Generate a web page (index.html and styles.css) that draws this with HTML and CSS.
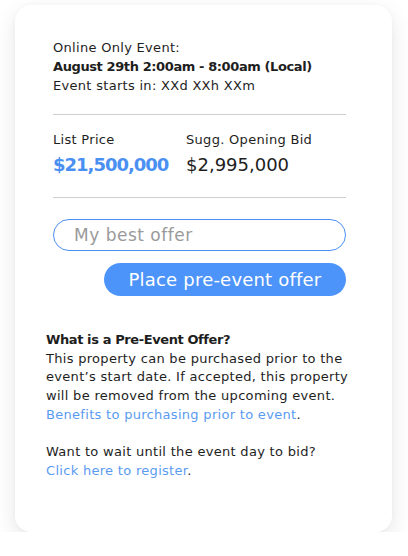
FILE: index.html
```html
<!DOCTYPE html>
<html>
<head>
<meta charset="utf-8">
<link rel="stylesheet" href="styles.css">
</head>
<body>
<div class="card">
  <div class="top">
    <div class="event">
      <div>Online Only Event:</div>
      <div class="bold">August 29th 2:00am - 8:00am (Local)</div>
      <div>Event starts in: XXd XXh XXm</div>
    </div>
    <div class="divider divider-first"></div>
    <div class="prices">
      <div class="col col-list">
        <div class="label">List Price</div>
        <div class="price blue">$21,500,000</div>
      </div>
      <div class="col">
        <div class="label">Sugg. Opening Bid</div>
        <div class="price">$2,995,000</div>
      </div>
    </div>
    <div class="divider"></div>
    <div class="offer">
      <input class="input" type="text" placeholder="My best offer">
      <button class="btn">Place pre-event offer</button>
    </div>
  </div>
  <div class="info">
    <p class="para"><span class="bold">What is a Pre-Event Offer?</span><br>This property can be purchased prior to the event’s start date. If accepted, this property will be removed from the upcoming event. <a class="link" href="#">Benefits to purchasing prior to event</a>.</p>
    <p class="para">Want to wait until the event day to bid?<br><a class="link" href="#">Click here to register</a>.</p>
  </div>
</div>
</body>
</html>
```
FILE: styles.css
```css
html, body {
  margin: 0;
  padding: 0;
  background: #ffffff;
}
body {
  font-family: "DejaVu Sans", sans-serif;
  color: #1e1e1e;
  font-size: 13px;
  letter-spacing: 0.3px;
}
.card {
  margin: 5px 0 0 15px;
  width: 377px;
  height: 527px;
  box-sizing: border-box;
  background: #fff;
  border-radius: 16px;
  box-shadow: 0 8px 22px rgba(0, 0, 0, 0.1), 0 0 5px rgba(0, 0, 0, 0.03);
}
.top {
  padding: 33px 46px 0 38px;
}
.event {
  line-height: 19px;
}
.bold {
  font-weight: bold;
  letter-spacing: -0.4px;
}
.divider {
  height: 1px;
  background: #cfcfcf;
  margin-top: 21px;
}
.divider-first {
  margin-top: 19px;
}
.prices {
  display: flex;
  padding-top: 15px;
}
.col-list {
  width: 133px;
}
.label {
  line-height: 19px;
}
.price {
  font-size: 18px;
  line-height: 22px;
  margin-top: 5px;
  letter-spacing: 0;
}
.blue {
  color: #4a90f2;
  font-weight: bold;
  letter-spacing: -1px;
}
.offer {
  display: flex;
  flex-direction: column;
  align-items: flex-end;
  gap: 12px;
  padding-top: 21px;
}
.input {
  width: 100%;
  height: 32px;
  box-sizing: border-box;
  border: 1px solid #4a90f2;
  border-radius: 16px;
  padding: 0 20px;
  font-family: inherit;
  font-size: 17px;
  letter-spacing: 0.5px;
  color: #333;
  outline: none;
}
.input::placeholder {
  color: #9a9a9a;
}
.btn {
  width: 242px;
  height: 33px;
  border: none;
  border-radius: 17px;
  background: #4d94fa;
  color: #fff;
  font-family: inherit;
  font-size: 18px;
  letter-spacing: 0.2px;
  padding: 0;
}
.info {
  padding: 35px 40px 0 31px;
}
.para {
  margin: 0 0 18.7px 0;
  line-height: 18.7px;
}
.link {
  color: #5a9bf2;
  text-decoration: none;
}
```
